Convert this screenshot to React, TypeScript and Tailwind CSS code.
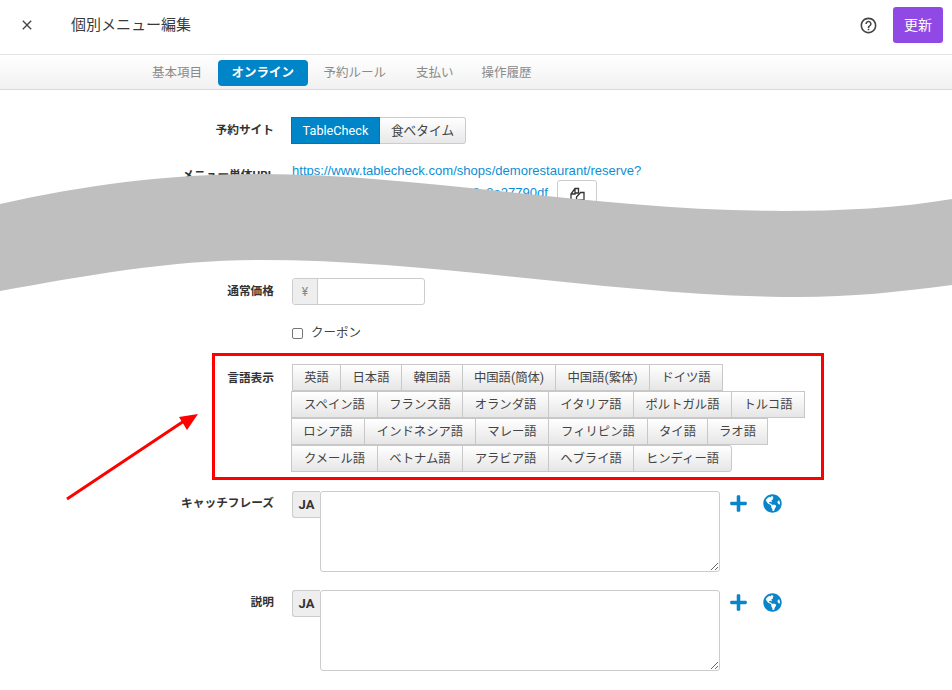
import { FaGlobeAmericas, FaPlus } from "react-icons/fa";
import { MdClose, MdHelpOutline } from "react-icons/md";

const tabs = ["基本項目", "オンライン", "予約ルール", "支払い", "操作履歴"];
const languages = [
  { l: "英語", w: "w-[49px]" },
  { l: "日本語", w: "w-[62px]" },
  { l: "韓国語", w: "w-[62px]" },
  { l: "中国語(簡体)", w: "w-[94px]" },
  { l: "中国語(繁体)", w: "w-[95px]" },
  { l: "ドイツ語", w: "w-[74px]" },
  { l: "スペイン語", w: "w-[87px]" },
  { l: "フランス語", w: "w-[86px]" },
  { l: "オランダ語", w: "w-[87px]" },
  { l: "イタリア語", w: "w-[86px]" },
  { l: "ポルトガル語", w: "w-[99px]" },
  { l: "トルコ語", w: "w-[74px]" },
  { l: "ロシア語", w: "w-[74px]" },
  { l: "インドネシア語", w: "w-[112px]" },
  { l: "マレー語", w: "w-[74px]" },
  { l: "フィリピン語", w: "w-[100px]" },
  { l: "タイ語", w: "w-[61px]" },
  { l: "ラオ語", w: "w-[61px]" },
  { l: "クメール語", w: "w-[87px]" },
  { l: "ベトナム語", w: "w-[86px]" },
  { l: "アラビア語", w: "w-[87px]" },
  { l: "ヘブライ語", w: "w-[86px]" },
  { l: "ヒンディー語", w: "w-[99px]" },
];

function Label({ children }: { children: React.ReactNode }) {
  return <div className="w-[274px] shrink-0 text-right text-[11.7px] font-bold text-[#333]">{children}</div>;
}

function LangField({ label, top }: { label: string; top: string }) {
  return (
    <div className={`flex gap-[18px] ${top}`}>
      <Label><div className="pt-[4px]">{label}</div></Label>
      <div className="flex items-start">
        <div className="flex h-[27px] w-[28px] items-center justify-center rounded-l-[3px] border border-r-0 border-[#ccc] bg-[#eee] text-[13px] font-bold text-[#333]">JA</div>
        <textarea className="h-[81px] w-[400px] rounded-[3px] border border-[#ccc] bg-white" />
        <FaPlus className="ml-[9px] mt-[3px] text-[#0a85c9]" size={19} />
        <FaGlobeAmericas className="ml-[15px] mt-[3px] text-[#0a85c9]" size={19} />
      </div>
    </div>
  );
}

export default function App() {
  return (
    <div className="relative h-[690px] w-[952px] overflow-hidden bg-white font-['Roboto','Noto_Sans_CJK_JP',sans-serif] text-[#333]">
      <header className="flex h-[55px] items-center border-b border-[#e3e3e3] pb-[4px] pl-[19px] pr-[9px]">
        <MdClose size={16} className="text-[#444]" />
        <h1 className="ml-[36px] text-[15px] font-normal leading-none text-[#3a3a3a]">個別メニュー編集</h1>
        <MdHelpOutline size={19} className="ml-auto text-[#444]" />
        <button className="ml-[15px] h-[36px] w-[50px] rounded-[3px] bg-[#9149e6] text-[14px] text-white">更新</button>
      </header>

      <nav className="flex h-[35px] items-center gap-[2px] border-b border-[#d9d9d9] bg-gradient-to-b from-white to-[#f1f1f1] pl-[138px] pt-[2px] text-[12.5px] text-[#8a8a8a]">
        {tabs.map((t) =>
          t === "オンライン" ? (
            <span key={t} className="flex h-[26px] items-center rounded-[4px] bg-[#0085c8] px-[13.5px] pt-px font-bold text-white">{t}</span>
          ) : t === "操作履歴" ? (
            <span key={t} className="-ml-[2px] px-[14px]">{t}</span>
          ) : (
            <span key={t} className="px-[14px]">{t}</span>
          ),
        )}
      </nav>

      <main className="pt-[27px]">
        <div className="flex items-center gap-[17px]">
          <Label><div className="pt-px">予約サイト</div></Label>
          <div className="flex h-[27px] text-[12.7px]">
            <span className="flex w-[89px] items-center justify-center border border-[#0077b5] bg-[#0085c8] pt-px text-white">TableCheck</span>
            <span className="flex w-[86px] items-center justify-center rounded-r-[3px] border border-l-0 border-[#ccc] bg-gradient-to-b from-white to-[#e8e8e8] pt-px text-[#444]">食べタイム</span>
          </div>
        </div>

        <div className="mt-[18px] flex gap-[18px]">
          <Label><div className="pt-[5px]">メニュー単体URL</div></Label>
          <div className="w-[360px] font-['Liberation_Sans',sans-serif] text-[13.07px] text-[#0a8fd6]">
            <div className="leading-[18px]">https://www.tablecheck.com/shops/demorestaurant/reserve?</div>
            <div className="flex w-[305px] justify-end gap-[9px]">
              <span className="whitespace-nowrap pt-[3px]">menu_item_id=5f8a0c3e27790df</span>
              <span className="flex h-[27px] w-[40px] shrink-0 items-center justify-center rounded-[3px] border border-[#ccc] bg-white text-[#333]">
                <svg width="17" height="16" viewBox="0 0 16 16" fill="none" stroke="#333" strokeWidth="1.3">
                  <path d="M1.5 14V8L5.5 2.5H9V7H5.5V2.5M1.5 8H5.5V7" />
                  <path d="M7 14V11L11 6.5H14.5V14Z" />
                </svg>
              </span>
            </div>
          </div>
        </div>

        <div className="mt-[71px] flex items-center gap-[18px]">
          <Label>通常価格</Label>
          <div className="flex h-[27px] w-[133px] rounded-[3px] border border-[#ccc]">
            <span className="flex w-[25px] items-center justify-center rounded-l-[3px] border-r border-[#ccc] bg-[#eee] text-[12px] text-[#888]">¥</span>
          </div>
        </div>

        <label className="ml-[292px] mt-[20px] flex h-[16px] items-center gap-[8px] text-[12.5px] text-[#444]">
          <span className="h-[11px] w-[11px] rounded-[2px] border border-[#767676] bg-white" />
          クーポン
        </label>

        <div className="mt-[23px] flex gap-[17px]">
          <Label><div className="pt-[6px]">言語表示</div></Label>
          <div className="flex w-[515px] flex-wrap">
            {languages.map(({ l, w }, i) => (
              <span
                key={l}
                className={`-mr-px flex h-[27px] items-center justify-center whitespace-nowrap border border-[#c8c8c8] bg-gradient-to-b from-white to-[#e6e6e6] pt-px text-[12.35px] text-[#444] ${w} ${i === 0 ? "ml-px" : ""} ${l === "ヒンディー語" ? "rounded-r-[3px]" : ""}`}
              >
                {l}
              </span>
            ))}
          </div>
        </div>

        <LangField label="キャッチフレーズ" top="mt-[19px]" />
        <LangField label="説明" top="mt-[18px]" />
      </main>

      {/* Torn-page band hiding part of the form */}
      <svg className="absolute left-0 top-0" width="952" height="690" viewBox="0 0 952 690" fill="none">
        <path
          d="M0 204C90 184 170 174 261 174C420 174 600 211 783 211C840 211 900 208 952 199L952 285C900 292 850 297 800 297C620 297 440 260 261 260C170 260 90 275 0 291Z"
          fill="#bfbfbf"
        />
        <path d="M67 499L187 419" stroke="#ff0000" strokeWidth="3" />
        <path d="M198 414L179 417L187 430Z" fill="#ff0000" />
      </svg>

      {/* Annotation frame around the language buttons */}
      <div className="absolute left-[212px] top-[353px] h-[127px] w-[612px] border-[3px] border-[#ff0000]" />
    </div>
  );
}
